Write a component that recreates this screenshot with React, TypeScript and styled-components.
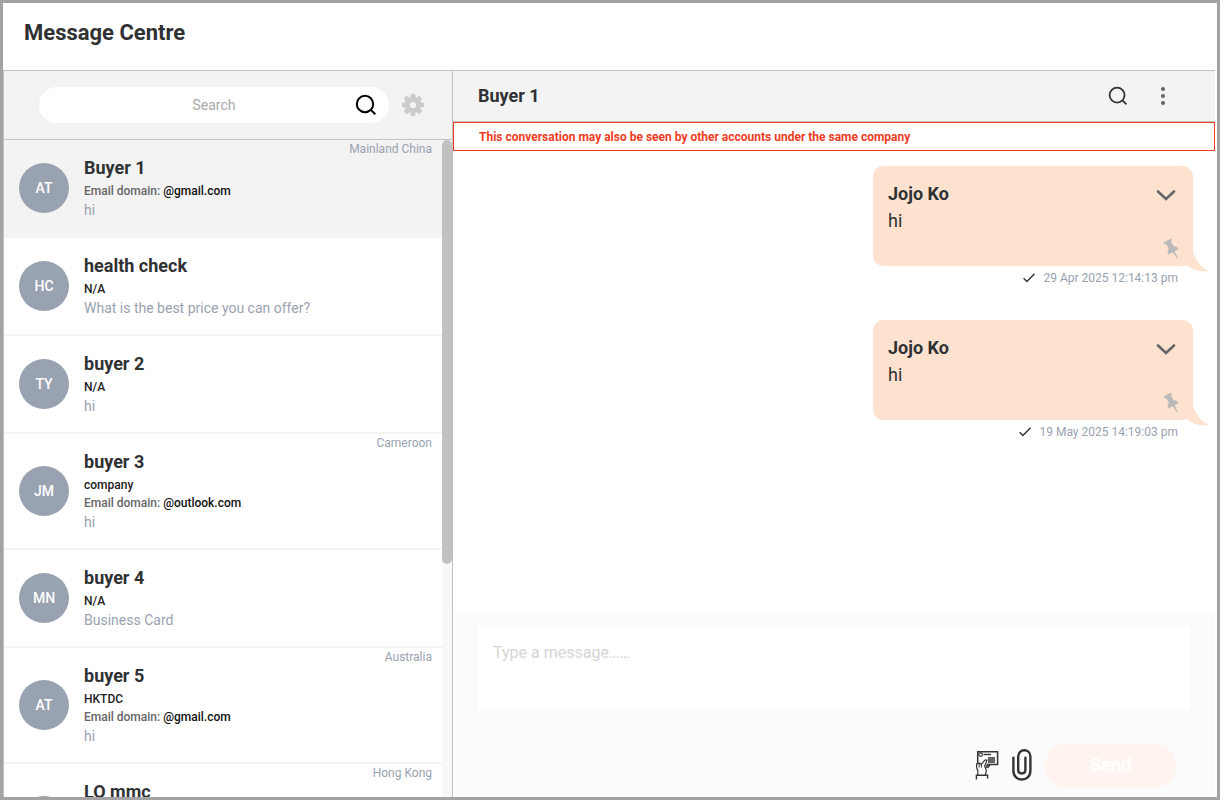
import React from "react";
import styled, { createGlobalStyle } from "styled-components";

const GlobalStyle = createGlobalStyle`
  *, *::before, *::after { box-sizing: border-box; }
  body {
    margin: 0;
    font-family: Roboto, "Liberation Sans", sans-serif;
    color: #2f3133;
    background: #fff;
  }
  button, input, textarea { font: inherit; color: inherit; }
`;

const Frame = styled.div`
  display: flex;
  flex-direction: column;
  height: 100vh;
  border: 3px solid #a3a3a3;
  background: #fff;
`;

const PageHeader = styled.header`
  padding: 15px 21px 22px;
`;

const PageTitle = styled.h1`
  margin: 0;
  font-size: 22px;
  line-height: 30px;
  font-weight: 700;
`;

const Body = styled.main`
  flex: 1;
  min-height: 0;
  display: flex;
  margin-right: 2px;
  border-top: 1px solid #c1c1c1;
  border-left: 1px solid #c1c1c1;
`;

const Sidebar = styled.aside`
  flex: 0 0 449px;
  display: flex;
  flex-direction: column;
  border-right: 1px solid #c1c1c1;
`;

const SearchBar = styled.form`
  display: flex;
  align-items: center;
  gap: 12px;
  padding: 16px 27px 16px 35px;
  background: #f3f3f3;
  border-bottom: 1px solid #c1c1c1;
`;

const SearchPill = styled.div`
  flex: 1;
  display: flex;
  align-items: center;
  height: 36px;
  padding-right: 12px;
  border-radius: 18px;
  background: #fff;
`;

const SearchInput = styled.input`
  flex: 1;
  min-width: 0;
  padding: 0 0 0 34px;
  border: 0;
  outline: 0;
  background: transparent;
  font-size: 14px;
  line-height: 20px;
  text-align: center;
  &::placeholder { color: #a9a9a9; opacity: 1; }
`;

const IconButton = styled.button`
  display: flex;
  align-items: center;
  justify-content: center;
  padding: 0;
  border: 0;
  background: transparent;
  cursor: pointer;
`;

const ListArea = styled.div`
  flex: 1;
  min-height: 0;
  display: flex;
`;

const ContactList = styled.ul`
  flex: 1;
  min-width: 0;
  margin: 0;
  padding: 0;
  list-style: none;
  overflow: hidden;
`;

const ScrollTrack = styled.div`
  flex: 0 0 10px;
  background: #f8f8f8;
`;

const ScrollThumb = styled.div`
  height: 64.5%;
  border-radius: 5px;
  background: #c1c1c1;
`;

const ContactRow = styled.li<{ $active?: boolean }>`
  display: flex;
  align-items: center;
  gap: 15px;
  padding: 0 10px 0 15px;
  border-bottom: 2px solid #f3f3f3;
  background: ${(p) => (p.$active ? "#f3f3f3" : "#fff")};
`;

const Avatar = styled.span`
  flex: 0 0 50px;
  height: 50px;
  border-radius: 50%;
  background: #99a2b1;
  color: #fff;
  font-size: 14px;
  line-height: 50px;
  font-weight: 500;
  text-align: center;
`;

const ContactText = styled.div`
  flex: 1;
  min-width: 0;
  padding: 16px 0;
`;

const ContactName = styled.h2`
  margin: 0 0 2px;
  font-size: 18px;
  line-height: 24px;
  font-weight: 700;
`;

const Detail = styled.p<{ $muted?: boolean }>`
  margin: 0;
  font-size: 12px;
  line-height: 18px;
  font-weight: 500;
  color: ${(p) => (p.$muted ? "#666" : "#222")};
`;

const Domain = styled.span`
  color: #111;
`;

const Preview = styled.p`
  margin: 0;
  font-size: 14px;
  line-height: 20px;
  color: #99a2b1;
`;

const Country = styled.span`
  align-self: flex-start;
  font-size: 12px;
  line-height: 18px;
  color: #99a2b1;
`;

const Chat = styled.section`
  flex: 1;
  min-width: 0;
  display: flex;
  flex-direction: column;
`;

const ChatHeader = styled.header`
  display: flex;
  align-items: center;
  justify-content: space-between;
  height: 51px;
  padding: 0 46px 0 25px;
  background: #f3f3f3;
  border-bottom: 1px solid #c1c1c1;
`;

const ChatTitle = styled.h2`
  margin: 0;
  font-size: 18px;
  line-height: 24px;
  font-weight: 700;
`;

const ChatActions = styled.div`
  display: flex;
  align-items: center;
  gap: 29px;
`;

const Notice = styled.p`
  margin: 0;
  padding: 6px 25px 5px;
  border: 1px solid #f03c24;
  color: #f03c24;
  font-size: 12px;
  line-height: 16px;
  font-weight: 700;
`;

const Messages = styled.div`
  flex: 1;
  min-height: 0;
  display: flex;
  flex-direction: column;
  align-items: flex-end;
  gap: 30px;
  padding: 15px 22px;
  overflow: hidden;
`;

const Message = styled.article`
  width: 320px;
`;

const Bubble = styled.div`
  position: relative;
  display: flex;
  justify-content: space-between;
  height: 100px;
  padding: 15px 14px 6px 15px;
  border-radius: 10px;
  background: #fde2d0;
`;

const Tail = styled.svg`
  position: absolute;
  right: -16px;
  bottom: -6px;
`;

const Sender = styled.h3`
  margin: 0;
  font-size: 18px;
  line-height: 26px;
  font-weight: 700;
`;

const MessageText = styled.p`
  margin: 0;
  font-size: 18px;
  line-height: 28px;
`;

const BubbleActions = styled.div`
  display: flex;
  flex-direction: column;
  align-items: flex-end;
  justify-content: space-between;
`;

const Stamp = styled.div`
  display: flex;
  align-items: center;
  justify-content: flex-end;
  gap: 8px;
  padding-right: 15px;
  font-size: 12px;
  line-height: 24px;
  color: #99a2b1;
`;

const Composer = styled.form`
  padding: 15px 25px 9px;
  background: #fbfbfb;
`;

const MessageInput = styled.textarea`
  display: block;
  width: 100%;
  height: 84px;
  padding: 15px;
  border: 0;
  outline: 0;
  resize: none;
  background: #fff;
  font-size: 16px;
  line-height: 24px;
  &::placeholder { color: #d6d6d6; opacity: 1; }
`;

const ComposerActions = styled.div`
  display: flex;
  align-items: center;
  justify-content: flex-end;
  gap: 13px;
  padding: 33px 14px 0 0;
`;

const SendButton = styled.button`
  width: 131px;
  height: 45px;
  padding: 0 0 2px;
  border: 0;
  border-radius: 23px;
  background: #fff4ef;
  color: #fff;
  font-size: 18px;
  line-height: 24px;
  font-weight: 700;
`;

const SearchIcon = ({ size, color }: { size: number; color: string }) => (
  <svg width={size} height={size} viewBox="0 0 22 22" fill="none" stroke={color} strokeWidth="2" aria-hidden="true">
    <circle cx="10" cy="10" r="8.2" />
    <path d="M15.6 15.6 L20.3 20.3" />
  </svg>
);

const GearIcon = () => (
  <svg width="24" height="24" viewBox="-12 -12 24 24" aria-hidden="true">
    <g fill="#ccc">
      {[0, 45, 90, 135].map((angle) => (
        <path
          key={angle}
          d="M-2 -11 H2 L3 -6 V6 L2 11 H-2 L-3 6 V-6 Z"
          transform={`rotate(${angle})`}
        />
      ))}
      <circle r="8" />
    </g>
    <circle r="3.1" fill="#f3f3f3" />
  </svg>
);

const DotsIcon = () => (
  <svg width="12" height="20" viewBox="0 0 12 20" fill="#666" aria-hidden="true">
    <circle cx="6" cy="3" r="2.1" />
    <circle cx="6" cy="10" r="2.1" />
    <circle cx="6" cy="17" r="2.1" />
  </svg>
);

const ChevronIcon = () => (
  <svg width="26" height="26" viewBox="0 0 26 26" fill="none" stroke="#666" strokeWidth="2.6" aria-hidden="true">
    <path d="M5 10.5 L13 18 L21 10.5" strokeLinecap="round" />
  </svg>
);

const PinIcon = () => (
  <svg width="16" height="22" viewBox="0 0 16 22" fill="#b9b9b9" aria-hidden="true">
    <path d="M0.4 4.7 L8 0.6 L8.9 2.1 L7.9 3.6 L10.6 8.2 C12.6 7.9 14.6 9 15.6 11.1 L11.6 13.3 L15.1 20.6 L14.6 20.9 L9.7 14.3 L5.4 16.6 C4.2 14.5 4.5 12.2 5.9 10.8 L3.2 6.1 L1.4 6.2 Z" />
  </svg>
);

const CheckIcon = () => (
  <svg width="12" height="10" viewBox="0 0 12 10" fill="none" stroke="#2f3133" strokeWidth="1.4" aria-hidden="true">
    <path d="M0.6 5.2 L3.9 8.6 L11.5 0.8" />
  </svg>
);

const CardIcon = () => (
  <svg width="24" height="32" viewBox="0 0 24 32" fill="none" stroke="#333" aria-hidden="true">
    <path d="M2.7 14 V1.7 H22.6 V14.6 H12" strokeWidth="1.5" />
    <circle cx="5.6" cy="4.6" r="1.8" strokeWidth="1.2" />
    <path d="M8.6 4.5 H16" strokeWidth="1.4" />
    <path d="M13 8 H20 M12.6 10 H20 M13 12 H20" strokeWidth="1.4" />
    <path d="M2.8 25 V20.5 C1.4 18.8 1.4 16 1.8 13.8 L4.8 13.2 L6.4 14.4 L9.8 10.2 C10.9 9.4 12 10.2 11.5 11.6 L9.6 16.4 C11.4 18.6 11.6 22 10.2 25" fill="#fbfbfb" strokeWidth="1.2" />
    <path d="M4.2 14 V17.5 M6.4 14.5 V17.5" strokeWidth="1" />
    <path d="M1.4 29.4 V25.2 H12.6 V28.6" strokeWidth="1.4" />
    <path d="M11.6 15.2 V17.6 H13.4 L15 15.2 Z" fill="#777" strokeWidth="1" />
  </svg>
);

const ClipIcon = () => (
  <svg width="20" height="34" viewBox="0 0 20 34" fill="none" stroke="#333" strokeWidth="2.4" strokeLinecap="round" aria-hidden="true">
    <path d="M1.4 8.6 V21.8 C1.4 33.4 18.4 33.4 18.4 21.8 V7.6 C18.4 -0.8 6.2 -0.8 6.2 7.6 V21 C6.2 25.6 13.4 25.6 13.4 21 V8.6" />
  </svg>
);

interface Contact {
  initials: string;
  name: string;
  company?: string;
  domain?: string;
  preview: string;
  country?: string;
}

const contacts: Contact[] = [
  { initials: "AT", name: "Buyer 1", domain: "@gmail.com", preview: "hi", country: "Mainland China" },
  { initials: "HC", name: "health check", company: "N/A", preview: "What is the best price you can offer?" },
  { initials: "TY", name: "buyer 2", company: "N/A", preview: "hi" },
  { initials: "JM", name: "buyer 3", company: "company", domain: "@outlook.com", preview: "hi", country: "Cameroon" },
  { initials: "MN", name: "buyer 4", company: "N/A", preview: "Business Card" },
  { initials: "AT", name: "buyer 5", company: "HKTDC", domain: "@gmail.com", preview: "hi", country: "Australia" },
  { initials: "LM", name: "LO mmc", company: "N/A", domain: "@gmail.com", preview: "hi", country: "Hong Kong" },
];

const messages = [
  { sender: "Jojo Ko", text: "hi", time: "29 Apr 2025 12:14:13 pm" },
  { sender: "Jojo Ko", text: "hi", time: "19 May 2025 14:19:03 pm" },
];

export default function App() {
  return (
    <Frame>
      <GlobalStyle />
      <PageHeader>
        <PageTitle>Message Centre</PageTitle>
      </PageHeader>
      <Body>
        <Sidebar>
          <SearchBar onSubmit={(e) => e.preventDefault()}>
            <SearchPill>
              <SearchInput type="text" placeholder="Search" aria-label="Search" />
              <IconButton type="submit" aria-label="Search contacts">
                <SearchIcon size={22} color="#000" />
              </IconButton>
            </SearchPill>
            <IconButton type="button" aria-label="Settings">
              <GearIcon />
            </IconButton>
          </SearchBar>
          <ListArea>
            <ContactList>
              {contacts.map((c, i) => (
                <ContactRow key={c.name} $active={i === 0}>
                  <Avatar>{c.initials}</Avatar>
                  <ContactText>
                    <ContactName>{c.name}</ContactName>
                    {c.company && <Detail>{c.company}</Detail>}
                    {c.domain && (
                      <Detail $muted>
                        Email domain: <Domain>{c.domain}</Domain>
                      </Detail>
                    )}
                    <Preview>{c.preview}</Preview>
                  </ContactText>
                  {c.country && <Country>{c.country}</Country>}
                </ContactRow>
              ))}
            </ContactList>
            <ScrollTrack>
              <ScrollThumb />
            </ScrollTrack>
          </ListArea>
        </Sidebar>
        <Chat>
          <ChatHeader>
            <ChatTitle>Buyer 1</ChatTitle>
            <ChatActions>
              <IconButton type="button" aria-label="Search conversation">
                <SearchIcon size={20} color="#333" />
              </IconButton>
              <IconButton type="button" aria-label="More options">
                <DotsIcon />
              </IconButton>
            </ChatActions>
          </ChatHeader>
          <Notice>This conversation may also be seen by other accounts under the same company</Notice>
          <Messages>
            {messages.map((m) => (
              <Message key={m.time}>
                <Bubble>
                  <div>
                    <Sender>{m.sender}</Sender>
                    <MessageText>{m.text}</MessageText>
                  </div>
                  <BubbleActions>
                    <IconButton type="button" aria-label="Message options">
                      <ChevronIcon />
                    </IconButton>
                    <IconButton type="button" aria-label="Pin message">
                      <PinIcon />
                    </IconButton>
                  </BubbleActions>
                  <Tail width="22" height="22" viewBox="0 0 22 22" fill="#fde2d0" aria-hidden="true">
                    <path d="M6 2 C8.5 9 13.5 17.5 22 21 C14 22.5 6 20 0 15 Z" />
                  </Tail>
                </Bubble>
                <Stamp>
                  <CheckIcon />
                  <time>{m.time}</time>
                </Stamp>
              </Message>
            ))}
          </Messages>
          <Composer onSubmit={(e) => e.preventDefault()}>
            <MessageInput placeholder="Type a message……" aria-label="Message" />
            <ComposerActions>
              <IconButton type="button" aria-label="Send business card">
                <CardIcon />
              </IconButton>
              <IconButton type="button" aria-label="Attach file">
                <ClipIcon />
              </IconButton>
              <SendButton type="submit">Send</SendButton>
            </ComposerActions>
          </Composer>
        </Chat>
      </Body>
    </Frame>
  );
}
